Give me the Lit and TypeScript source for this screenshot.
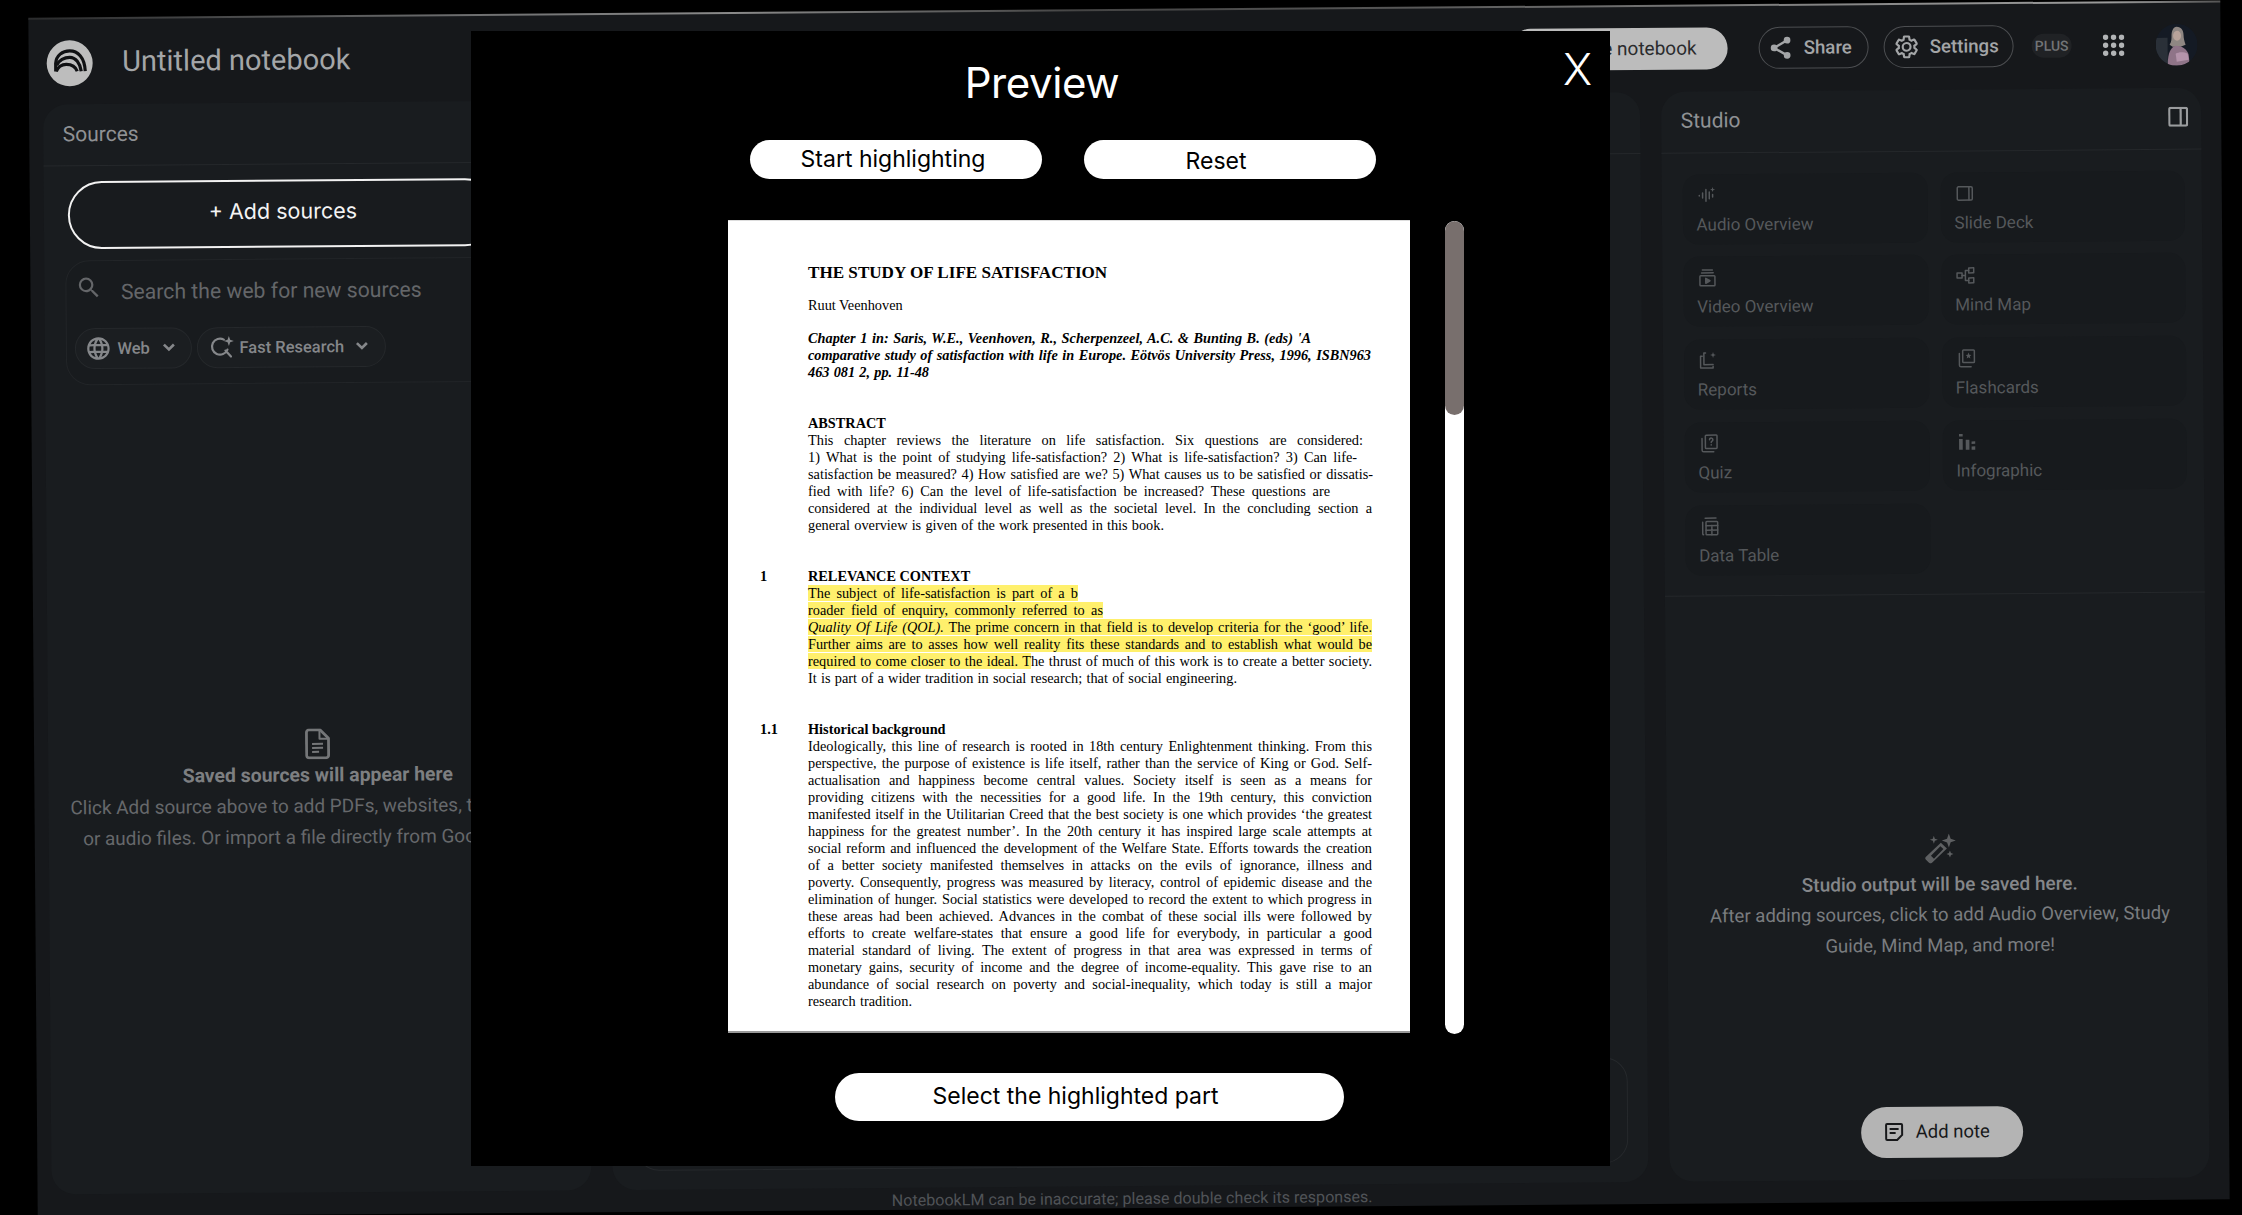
import { LitElement, html, css, svg } from "lit";
import { customElement } from "lit/decorators.js";

const F = 564;
const abstractLines: [string, number][] = [
  ["This chapter reviews the literature on life satisfaction. Six questions are considered:", 555],
  ["1) What is the point of studying life-satisfaction? 2) What is life-satisfaction? 3) Can life-", 549],
  ["satisfaction be measured? 4) How satisfied are we? 5) What causes us to be satisfied or dissatis-", 565],
  ["fied with life? 6) Can the level of life-satisfaction be increased? These questions are", 522],
  ["considered at the individual level as well as the societal level. In the concluding section a", F],
  ["general overview is given of the work presented in this book.", 356],
];
const historyLines: [string, number][] = [
  ["Ideologically, this line of research is rooted in 18th century Enlightenment thinking. From this", F],
  ["perspective, the purpose of existence is life itself, rather than the service of King or God. Self-", F],
  ["actualisation and happiness become central values. Society itself is seen as a means for", F],
  ["providing citizens with the necessities for a good life. In the 19th century, this conviction", F],
  ["manifested itself in the Utilitarian Creed that the best society is one which provides ‘the greatest", F],
  ["happiness for the greatest number’. In the 20th century it has inspired large scale attempts at", F],
  ["social reform and influenced the development of the Welfare State. Efforts towards the creation", F],
  ["of a better society manifested themselves in attacks on the evils of ignorance, illness and", F],
  ["poverty. Consequently, progress was measured by literacy, control of epidemic disease and the", F],
  ["elimination of hunger. Social statistics were developed to record the extent to which progress in", F],
  ["these areas had been achieved. Advances in the combat of these social ills were followed by", F],
  ["efforts to create welfare-states that ensure a good life for everybody, in particular a good", F],
  ["material standard of living. The extent of progress in that area was expressed in terms of", F],
  ["monetary gains, security of income and the degree of income-equality. This gave rise to an", F],
  ["abundance of social research on poverty and social-inequality, which today is still a major", F],
  ["research tradition.", 104],
];

const ico = (d: string, size = 24) =>
  html`<svg width=${size} height=${size} viewBox="0 0 24 24" fill="currentColor"><path d=${d}></path></svg>`;
const out = (body: unknown, w: number, h: number = w, sw = 1.8) =>
  html`<svg width=${w} height=${h} viewBox="0 0 24 24" fill="none" stroke="currentColor" stroke-width=${sw} stroke-linecap="round" stroke-linejoin="round" preserveAspectRatio="none">${body}</svg>`;

const SEARCH = "M15.5 14h-.79l-.28-.27A6.471 6.471 0 0 0 16 9.5 6.5 6.5 0 1 0 9.5 16c1.61 0 3.09-.59 4.23-1.57l.27.28v.79l5 4.99L20.49 19l-4.99-5zm-6 0C7.01 14 5 11.99 5 9.5S7.01 5 9.5 5 14 7.01 14 9.5 11.99 14 9.5 14z";
const GLOBE = "M11.99 2C6.47 2 2 6.48 2 12s4.47 10 9.99 10C17.52 22 22 17.52 22 12S17.52 2 11.99 2zm6.93 6h-2.95c-.32-1.25-.78-2.45-1.38-3.56 1.84.63 3.37 1.91 4.33 3.56zM12 4.04c.83 1.2 1.48 2.53 1.91 3.96h-3.82c.43-1.43 1.08-2.76 1.91-3.96zM4.26 14C4.1 13.36 4 12.69 4 12s.1-1.36.26-2h3.38c-.08.66-.14 1.32-.14 2 0 .68.06 1.34.14 2H4.26zm.82 2h2.95c.32 1.25.78 2.45 1.38 3.56-1.84-.63-3.37-1.9-4.33-3.56zm2.95-8H5.08c.96-1.66 2.49-2.93 4.33-3.56C8.81 5.55 8.35 6.75 8.03 8zM12 19.96c-.83-1.2-1.48-2.53-1.91-3.96h3.82c-.43 1.43-1.08 2.76-1.91 3.96zM14.34 14H9.66c-.09-.66-.16-1.32-.16-2 0-.68.07-1.35.16-2h4.68c.09.65.16 1.32.16 2 0 .68-.07 1.34-.16 2zm.25 5.56c.6-1.11 1.06-2.31 1.38-3.56h2.95c-.96 1.65-2.49 2.93-4.33 3.56zM16.36 14c.08-.66.14-1.32.14-2 0-.68-.06-1.34-.14-2h3.38c.16.64.26 1.31.26 2s-.1 1.36-.26 2h-3.38z";
const GEAR = "M19.14 12.94c.04-.3.06-.61.06-.94 0-.32-.02-.64-.07-.94l2.03-1.58a.49.49 0 0 0 .12-.61l-1.92-3.32a.488.488 0 0 0-.59-.22l-2.39.96c-.5-.38-1.03-.7-1.62-.94l-.36-2.54a.484.484 0 0 0-.48-.41h-3.84c-.24 0-.43.17-.47.41l-.36 2.54c-.59.24-1.13.57-1.62.94l-2.39-.96c-.22-.08-.47 0-.59.22L2.74 8.87c-.12.21-.08.47.12.61l2.03 1.58c-.05.3-.09.63-.09.94s.02.64.07.94l-2.03 1.58a.49.49 0 0 0-.12.61l1.92 3.32c.12.22.37.29.59.22l2.39-.96c.5.38 1.03.7 1.62.94l.36 2.54c.05.24.24.41.48.41h3.84c.24 0 .44-.17.47-.41l.36-2.54c.59-.24 1.13-.56 1.62-.94l2.39.96c.22.08.47 0 .59-.22l1.92-3.32c.12-.22.07-.47-.12-.61l-2.01-1.58zM12 15.6c-1.98 0-3.6-1.62-3.6-3.6s1.62-3.6 3.6-3.6 3.6 1.62 3.6 3.6-1.62 3.6-3.6 3.6z";

const chevron = html`<svg width="14" height="10" viewBox="0 0 14 10" fill="none" stroke="currentColor" stroke-width="2.6"><path d="M2 2l5 5 5-5"></path></svg>`;

const studioIcons: Record<string, unknown> = {
  audio: svg`<path d="M3 12v.5M7 9v6M11 5v14M15 8v8M19 11v3"/><path d="M19 2l.8 2.2L22 5l-2.2.8L19 8l-.8-2.2L16 5l2.200-.8z" fill="currentColor" stroke="none"/>`,
  slide: svg`<rect x="3" y="4" width="18" height="16" rx="1.5"/><path d="M17 4v16"/>`,
  video: svg`<path d="M6 3h12M5 6.500h14"/><rect x="3" y="10" width="18" height="12" rx="1"/><path d="M10 13v6l5-3z" fill="currentColor"/>`,
  map: svg`<rect x="2" y="9" width="6" height="6"/><rect x="16" y="3" width="6" height="6"/><rect x="16" y="15" width="6" height="6"/><path d="M8 12h4M12 6v12M12 6h4M12 18h4"/>`,
  report: svg`<path d="M9 3H7v14h11"/><path d="M5 7H3v14h15v-2"/><path d="M18 2l.9 2.600 2.600.9-2.600.9L18 9l-.9-2.600-2.600-.9 2.600-.9z" fill="currentColor" stroke="none"/>`,
  flash: svg`<rect x="8" y="2" width="14" height="15" rx="1"/><path d="M4 6v14a2 2 0 0 0 2 2h12"/><path d="M15 5l1 2.500 2.500.3-1.900 1.700.6 2.500-2.200-1.300-2.200 1.300.6-2.500-1.900-1.700 2.500-.3z" fill="currentColor" stroke="none"/>`,
  quiz: svg`<rect x="8" y="2" width="14" height="16" rx="1"/><path d="M4 6v14a2 2 0 0 0 2 2h12"/><path d="M13 7.500a2 2 0 1 1 3 1.800c-.7.400-1 .8-1 1.700M15 13.500v.4"/>`,
  info: svg`<path d="M5 9v13M5 3v3M13 10v12M20 12v3M20 18v4" stroke-width="4.400" stroke-linecap="butt"/>`,
  table: svg`<path d="M4 7v14a1 1 0 0 0 1 1"/><path d="M7 2h13"/><rect x="8" y="6" width="14" height="16" rx="1"/><path d="M8 11h14M8 16.500h14M15 11v11"/>`,
};

const cardItems: [string, string][] = [
  ["audio", "Audio Overview"], ["slide", "Slide Deck"],
  ["video", "Video Overview"], ["map", "Mind Map"],
  ["report", "Reports"], ["flash", "Flashcards"],
  ["quiz", "Quiz"], ["info", "Infographic"],
  ["table", "Data Table"],
];

@customElement("app-root")
export class AppRoot extends LitElement {
  static styles = css`
    :host { display: block; width: 2242px; height: 1215px; background: #000; position: relative; overflow: hidden; font-family: Roboto, "Noto Sans", sans-serif; }
    * { box-sizing: border-box; }
    .window { position: absolute; left: 32.5px; top: 9.5px; width: 2192px; height: 1197.5px; background: #16181b; transform: rotate(-0.45deg); display: flex; flex-direction: column; }
    .edge { height: 2px; margin-top: -1px; flex: none; background: linear-gradient(90deg, #2a2b2c 0%, #6d6e6f 20%, #8a8a8a 32%, #444 48%, #555 62%, #8a8a8a 85%, #9a9a9a 95%, #555 100%); }
    .topbar { height: 84.5px; flex: none; display: flex; align-items: center; padding: 0 22.5px 1px 17.5px; }
    .logo { width: 46px; height: 46px; border-radius: 50%; background: #bdbdbd; color: #101113; margin-top: 4px; flex: none; }
    .logo svg { display: block; }
    .title { margin-left: 30px; font-size: 29px; color: #a4a6a8; }
    .spacer { flex: 1; }
    .pill { height: 42px; display: flex; align-items: center; border-radius: 21px; font-size: 18.700px; }
    .create { width: 218px; background: #bcbcbc; color: #2a2b2d; justify-content: flex-end; padding-right: 31px; margin-right: 31px; font-size: 19px; }
    .ghost { border: 1px solid #4c4e51; color: #a3a5a7; font-weight: 500; gap: 10px; }
    .share { width: 110px; padding-left: 8px; margin-right: 15px; }
    .settings { width: 130px; padding-left: 9px; margin-right: 18px; }
    .plus { width: 40px; height: 24px; background: #202225; color: #727476; font-size: 14px; font-weight: 500; border-radius: 12px; display: flex; align-items: center; justify-content: center; margin-right: 31px; }
    .grid9 { color: #b2b4b6; display: flex; margin-right: 30.500px; }
    .avatar { width: 42px; height: 42px; flex: none; border-radius: 50%; overflow: hidden; margin-right: 1px; }
    .main { flex: 1; min-height: 0; display: flex; gap: 21px; padding: 0 20.5px 22px 13.5px; }
    .panel { background: #191c1f; border-radius: 24px; display: flex; flex-direction: column; min-width: 0; }
    .sources, .studio { width: 540px; flex: none; }
    .chat { flex: 1; position: relative; }
    .phead { height: 62px; flex: none; display: flex; align-items: center; justify-content: space-between; padding: 0 12px 0 20px; border-bottom: 1px solid #25282b; font-size: 21px; color: #8f9194; }
    .studio .phead { padding-bottom: 2px; padding-right: 13px; }
    .add { margin: 15px 85px 0 24px; height: 68px; flex: none; border: 2px solid #f2f2f2; border-radius: 34px; background: #181b1e; display: flex; align-items: center; justify-content: center; color: #f4f4f4; font-family: Inter, sans-serif; font-size: 21.5px; padding-bottom: 5px; }
    .searchbox { margin: 11px 0 0 21px; height: 125px; width: 505px; flex: none; border: 1px solid #222528; border-radius: 24px; background: #181b1e; padding: 16px 0 0 9px; }
    .sline { display: flex; align-items: center; color: #646669; font-size: 21.200px; gap: 19px; }
    .sline svg { width: 27px; height: 27px; margin-top: -6px; }
    .sline span { margin-top: 2px; }
    .chips { display: flex; gap: 5px; margin-top: 24px; margin-left: -1px; }
    .chip { height: 41px; border: 1px solid #25282b; border-radius: 21px; background: #1b1e21; display: flex; align-items: center; color: #85878a; font-weight: 500; font-size: 16.500px; }
    .chip.web { width: 117px; padding-left: 9px; gap: 6px; }
    .chip.web > svg:first-child { width: 27px; height: 27px; }
    .chip.fast { width: 189px; padding-left: 13px; gap: 5px; }
    .chip > svg:last-child { margin-left: 6px; }
    .empty { text-align: center; display: flex; flex-direction: column; align-items: center; }
    .empty-l { margin-top: 345px; color: #66686b; font-size: 18.950px; line-height: 31px; }
    .empty-l .docico { color: #747678; }
    .empty-l h3 { margin: 3px 0 0; font-size: 19.400px; line-height: 26px; font-weight: 700; color: #7d7f81; }
    .empty-l p { margin: 2px 0 0; }
    .chatbox { position: absolute; left: 23px; right: 20px; bottom: 19px; height: 106px; border: 1px solid #26292c; border-radius: 24px; }
    .studio-grid { display: grid; grid-template-columns: 245px 244px; gap: 12.800px 13px; padding: 21px 0 0 21px; flex: none; }
    .card { height: 70px; background: #171a1d; border-radius: 16px; padding: 11px 0 0 14px; color: #55585b; font-size: 17px; }
    .card svg { display: block; height: 20px; width: 20px; }
    .card span { display: block; margin-top: 8px; line-height: 22px; }
    .sep { height: 1px; background: #25282b; margin-top: 20px; flex: none; }
    .empty-r { margin-top: 239px; padding-left: 6px; color: #7a7c7f; font-size: 18.550px; line-height: 31px; flex: 1; }
    .empty-r .wand { color: #5e6062; }
    .empty-r h3 { margin: 8px 0 0; font-size: 19px; line-height: 26px; font-weight: 500; color: #85878a; }
    .empty-r p { margin: 2px 0 0; }
    .addnote { align-self: center; margin: 0 0 22px 6px; width: 162px; height: 51px; flex: none; border-radius: 26px; background: #b4b4b4; color: #17181a; font-size: 18.500px; display: flex; align-items: center; gap: 12px; padding-left: 23px; }
    .foot { position: absolute; left: 0; right: 0; bottom: -1px; text-align: center; font-size: 16.100px; color: #505357; line-height: 20px; padding-right: 3px; }
    .modal { position: absolute; left: 471px; top: 31px; width: 1139px; height: 1135px; background: #000; color: #fff; display: flex; flex-direction: column; font-family: Inter, sans-serif; }
    .modal h2 { margin: 24px 0 0; height: 56px; font-size: 42px; font-weight: 400; line-height: 56px; text-align: center; flex: none; width: 1142px; letter-spacing: -0.4px; }
    .close { position: absolute; left: 1092px; top: 16px; font-size: 44px; line-height: 44px; font-weight: 300; }
    .btnrow { display: flex; gap: 42px; margin: 29px 0 0 279px; flex: none; }
    .btn { width: 292px; height: 39px; background: #fff; color: #000; border-radius: 20px; display: flex; align-items: center; justify-content: center; font-size: 23px; padding: 0 6px 2px 0; }
    .btn.low { padding: 3px 28px 0 0; }
    .content { display: flex; gap: 35px; margin: 41px 0 0 257px; height: 813px; flex: none; }
    .page { width: 682px; height: 813px; background: #fff; border-top: 1px solid #ddd; border-bottom: 2px solid #999; color: #000; font-family: "Liberation Serif", serif; font-size: 14.300px; line-height: 17px; padding: 43px 0 0 32px; overflow: hidden; }
    .row { display: flex; }
    .num { width: 48px; flex: none; font-weight: 700; }
    .ln { height: 17px; white-space: nowrap; text-align: justify; text-align-last: justify; }
    .b { font-weight: 700; }
    .i { font-style: italic; }
    .t { font-size: 17.100px; }
    .gap16 { margin-top: 16px; }
    .gap34 { margin-top: 34px; }
    mark { background: #fff06c; color: inherit; }
    .bar { width: 19px; height: 813px; background: #fff; border-radius: 10px; margin-top: 1px; overflow: hidden; }
    .thumb { height: 194px; background: #786f6d; border-radius: 10px; }
    .selbtn { margin: 40px 0 0 364px; width: 509px; height: 48px; border-radius: 24px; background: #fff; color: #000; display: flex; align-items: center; justify-content: center; font-size: 23px; flex: none; padding: 0 28px 2px 0; }
  `;

  private ln(content: unknown, w: number, cls = "") {
    return html`<div class="ln ${cls}" style="width:${w}px">${content}</div>`;
  }

  private lines(list: [string, number][]) {
    return list.map(([t, w]) => this.ln(t, w));
  }

  render() {
    return html`
      <div class="window">
        <div class="edge"></div>
        <div class="topbar">
          <div class="logo">
            <svg width="46" height="46" viewBox="0 0 46 46" fill="none" stroke="currentColor" stroke-width="3.200">
              <path d="M9 31V23C9.500 15 16 10.500 23 10.500C31 10.500 38 17 38.500 31"></path>
              <path d="M10 25C12 20 18 17 23 17C29 17 33.500 23 34.500 31"></path>
              <path d="M9.500 31C11 27 15 24 19.500 24C25 24 29 27 30.500 31"></path>
            </svg>
          </div>
          <div class="title">Untitled notebook</div>
          <div class="spacer"></div>
          <div class="pill create">e notebook</div>
          <div class="pill ghost share">
            <svg width="26" height="26" viewBox="0 0 24 24" fill="currentColor" stroke="currentColor" stroke-width="2.200">
              <circle cx="18" cy="5" r="2"></circle><circle cx="6" cy="12" r="2"></circle><circle cx="18" cy="19" r="2"></circle>
              <path d="M6 12L18 5M6 12l12 7" fill="none"></path>
            </svg>
            Share
          </div>
          <div class="pill ghost settings">
            <svg width="26" height="26" viewBox="0 0 24 24" fill="none" stroke="currentColor" stroke-width="2"><path d=${GEAR}></path></svg>
            Settings
          </div>
          <div class="plus">PLUS</div>
          <div class="grid9">
            <svg width="22" height="22" viewBox="0 0 22 22" fill="currentColor">
              ${[3, 11, 19].flatMap((y) => [3, 11, 19].map((x) => svg`<circle cx=${x} cy=${y} r="2.700"></circle>`))}
            </svg>
          </div>
          <div class="avatar">
            <svg width="42" height="42" viewBox="0 0 42 42">
              <rect width="42" height="42" fill="#141a24"></rect>
              <rect x="0" y="14" width="12" height="28" fill="#2a3038"></rect>
              <path d="M21 3c5 0 7 4 7 8 0 4 1 7 2 10l-5 2h-8l-3-2c2-3 2-6 2-9 0-5 2-9 5-9z" fill="#8f8783"></path>
              <ellipse cx="21.500" cy="12" rx="4" ry="5" fill="#b8a39a"></ellipse>
              <path d="M12 42c0-8 1-18 8-20 6 0 11 3 13 9l1 11z" fill="#8f7488"></path>
              <path d="M20 30c3-2 8-2 12 0l1 6-12 2z" fill="#b494ab"></path>
            </svg>
          </div>
        </div>
        <div class="main">
          <section class="panel sources">
            <div class="phead">Sources</div>
            <div class="add">+ Add sources</div>
            <div class="searchbox">
              <div class="sline">${ico(SEARCH, 24)}<span>Search the web for new sources</span></div>
              <div class="chips">
                <div class="chip web">${ico(GLOBE, 24)}<span>Web</span>${chevron}</div>
                <div class="chip fast">
                  <svg width="24" height="24" viewBox="0 0 24 24" fill="none" stroke="currentColor" stroke-width="2.200" stroke-linecap="round">
                    <path d="M13 4.500a8 8 0 1 0 3.500 10M14.500 15.500l5.500 6"></path>
                    <path d="M18 1l1.300 3.700L23 6l-3.700 1.300L18 11l-1.300-3.700L13 6l3.700-1.300z" fill="currentColor" stroke="none"></path>
                  </svg>
                  <span>Fast Research</span>${chevron}
                </div>
              </div>
            </div>
            <div class="empty empty-l">
              <svg class="docico" width="25" height="31" viewBox="0 0 25 31" fill="none" stroke="currentColor" stroke-width="2.800" stroke-linejoin="round">
                <path d="M4 1.500h11l8.500 8.500v17a2.500 2.500 0 0 1-2.500 2.500H4A2.500 2.500 0 0 1 1.500 27V4A2.500 2.500 0 0 1 4 1.500z"></path>
                <path d="M14.500 2v8.500H23" stroke-width="2"></path>
                <path d="M7 15.500h11M7 19.500h11M7 23.500h7" stroke-width="2"></path>
              </svg>
              <h3>Saved sources will appear here</h3>
              <p>Click Add source above to add PDFs, websites, text, videos,<br />or audio files. Or import a file directly from Google Drive.</p>
            </div>
          </section>
          <section class="panel chat">
            <div class="phead"></div>
            <div class="chatbox"></div>
          </section>
          <section class="panel studio">
            <div class="phead">Studio
              <svg width="20" height="20" viewBox="0 0 20 20" fill="none" stroke="#9a9c9e" stroke-width="2.200">
                <rect x="1.100" y="1.100" width="17.800" height="17.800" rx="1.500"></rect>
                <path d="M12.500 1v18"></path>
              </svg>
            </div>
            <div class="studio-grid">
              ${cardItems.map(([k, label]) => html`<div class="card">${out(studioIcons[k], 20)}<span>${label}</span></div>`)}
            </div>
            <div class="sep"></div>
            <div class="empty empty-r">
              <svg class="wand" width="33" height="30" viewBox="0 0 33 30" fill="currentColor">
                <path d="M18 9l6 6L9 29c-1 1-2 1-3 0l-3-3c-1-1-1-2 0-3z M17.500 12.500L8 22l3 3 9.500-9.500z" fill-rule="evenodd"></path>
                <path d="M26 0l1.800 5.200L33 7l-5.200 1.800L26 14l-1.800-5.200L19 7l5.200-1.800zM11 2l1 3 3 1-3 1-1 3-1-3-3-1 3-1zM27 17l1 2.500 2.500 1-2.500 1-1 2.500-1-2.500-2.500-1 2.500-1z"></path>
              </svg>
              <h3>Studio output will be saved here.</h3>
              <p>After adding sources, click to add Audio Overview, Study<br />Guide, Mind Map, and more!</p>
            </div>
            <div class="addnote">
              <svg width="20" height="20" viewBox="0 0 20 20" fill="none" stroke="currentColor" stroke-width="2">
                <path d="M2 3a1 1 0 0 1 1-1h14a1 1 0 0 1 1 1v10l-5 5H3a1 1 0 0 1-1-1z"></path>
                <path d="M5.500 7h9M5.500 11h6"></path>
              </svg>
              Add note
            </div>
          </section>
        </div>
        <div class="foot">NotebookLM can be inaccurate; please double check its responses.</div>
      </div>

      <div class="modal">
        <h2>Preview</h2>
        <div class="close">X</div>
        <div class="btnrow">
          <div class="btn">Start highlighting</div>
          <div class="btn low">Reset</div>
        </div>
        <div class="content">
          <div class="page">
            <div class="row"><div class="num"></div><div class="b t">THE STUDY OF LIFE SATISFACTION</div></div>
            <div class="row gap16"><div class="num"></div><div>Ruut Veenhoven</div></div>
            <div class="row gap16"><div class="num"></div><div class="b i">
              ${this.ln("Chapter 1 in: Saris, W.E., Veenhoven, R., Scherpenzeel, A.C. & Bunting B. (eds) 'A", 503)}
              ${this.ln("comparative study of satisfaction with life in Europe. Eötvös University Press, 1996, ISBN963", 563)}
              ${this.ln("463 081 2, pp. 11-48", 121)}
            </div></div>
            <div class="row gap34"><div class="num"></div><div>
              <div class="b">ABSTRACT</div>
              ${this.lines(abstractLines)}
            </div></div>
            <div class="row gap34"><div class="num">1</div><div>
              <div class="b">RELEVANCE CONTEXT</div>
              ${this.ln(html`<mark>The subject of life-satisfaction is part of a b</mark>`, 270)}
              ${this.ln(html`<mark>roader field of enquiry, commonly referred to as</mark>`, 295)}
              <div class="ln" style="width:564px"><mark><span class="i">Quality Of Life (QOL).</span> The prime concern in that field is to develop criteria for the ‘good’ life.</mark></div>
              ${this.ln(html`<mark>Further aims are to asses how well reality fits these standards and to establish what would be</mark>`, 564)}
              ${this.ln(html`<mark>required to come closer to the ideal. T</mark>he thrust of much of this work is to create a better society.`, 564)}
              ${this.ln("It is part of a wider tradition in social research; that of social engineering.", 429)}
            </div></div>
            <div class="row gap34"><div class="num">1.1</div><div>
              <div class="b">Historical background</div>
              ${this.lines(historyLines)}
            </div></div>
          </div>
          <div class="bar"><div class="thumb"></div></div>
        </div>
        <div class="selbtn">Select the highlighted part</div>
      </div>
    `;
  }
}
